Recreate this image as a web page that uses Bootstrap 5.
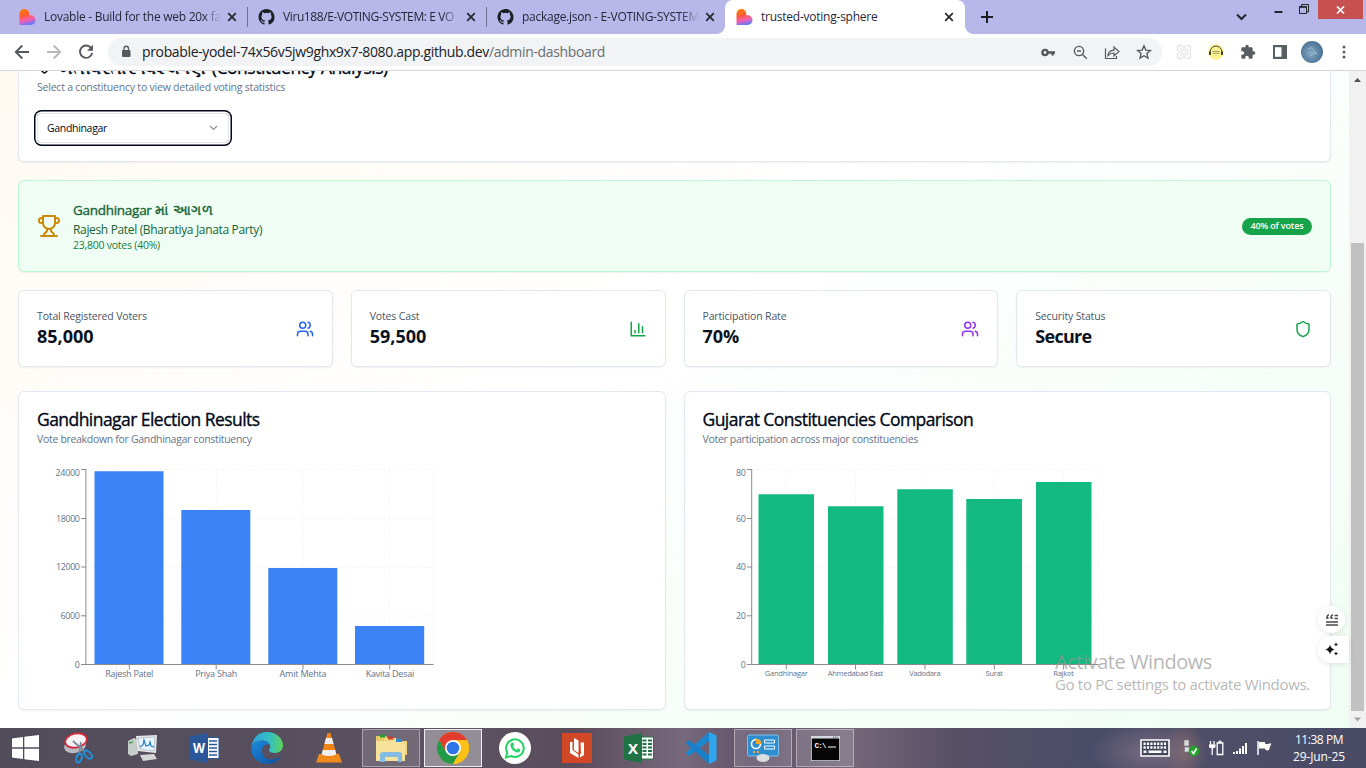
<!DOCTYPE html>
<html lang="en">
<head>
<meta charset="utf-8">
<meta name="viewport" content="width=device-width, initial-scale=1">
<title>trusted-voting-sphere</title>
<link href="https://cdn.jsdelivr.net/npm/bootstrap@5.3.0/dist/css/bootstrap.min.css" rel="stylesheet">
<style>
html,body{height:100%;overflow:hidden}
body{font-family:"Open Sans","Noto Sans",sans-serif;font-size:12px;line-height:1.2;color:#020817;background:#fff}
svg{display:block;flex:none}
.screen{width:1366px;height:768px;overflow:hidden;position:relative}
.txt{white-space:nowrap}
/* browser */
.tabstrip{height:34px;background:#b7b7e9;padding-left:8px;color:#27273a}
.btab{width:239px;height:34px;padding-left:11px;position:relative}
.btab svg.fav{margin-right:8px}
.btab .ttl{width:177px;margin-right:6px;letter-spacing:-.27px}
.btab .ttl.t2{letter-spacing:-.4px}
.btab .fade-end{-webkit-mask-image:linear-gradient(90deg,#000 90%,transparent 100%);mask-image:linear-gradient(90deg,#000 90%,transparent 100%)}
.btab .rule{position:absolute;right:-1px;top:7px;width:1px;height:20px;background:#6f6f93}
.btab.active{background:#fff;border-radius:8px 8px 0 0;width:240px}
.btab.active .ttl{letter-spacing:-.24px}
.btab.active::before,.btab.active::after{content:"";position:absolute;bottom:0;width:8px;height:8px}
.btab.active::before{left:-8px;background:radial-gradient(circle at 0 0,transparent 7.5px,#fff 8px)}
.btab.active::after{right:-8px;background:radial-gradient(circle at 100% 0,transparent 7.5px,#fff 8px)}
.winclose{width:45px;height:19px;background:#c75050}
.toolbar{height:37px;border-bottom:1px solid #d5d6d9;background:#fff;padding-left:6px}
.tool{width:32px;height:36px}
.omni{width:1054px;height:28px;border-radius:14px;background:#f1f3f4;margin-left:6px;margin-right:6px;padding-left:12px;padding-right:2px}
.url{font-size:14px;letter-spacing:-.35px;color:#202124;margin-left:10px}
.url span{color:#6a6d71}
/* page */
.page{width:1349px;height:657px;overflow:hidden;padding:0 18px;background:linear-gradient(to bottom right,#fff7ed,#fff,#f0fdf4) left bottom/1349px 875px no-repeat}
.panel{background:#fff;border:1px solid #e2e8f0;border-radius:6px;box-shadow:0 1px 2px rgba(0,0,0,.06)}
.p-select{height:121px;margin-top:-30px;padding:13px 18px 0}
.h-lg{font-size:17.5px;line-height:24px;letter-spacing:-.55px;-webkit-text-stroke:.35px #020817}
.h-guj{letter-spacing:.35px}
.h-paren{margin-left:5px;letter-spacing:-.46px}
.desc{font-size:10.5px;line-height:17px;color:#64748b;letter-spacing:-.21px}
.chart .desc{letter-spacing:-.31px}
.pick{width:192px;height:30px;border:1px solid #e2e8f0;border-radius:4.5px;font-size:10.5px;letter-spacing:-.32px;padding:0 10px 0 9px;margin-top:17px;box-shadow:0 0 0 1.5px #fff,0 0 0 3px #020817}
.leader{height:92px;margin-top:18px;background:#f0fdf4;border-color:#bbf7d0;padding:0 18px;color:#166534}
.leader .a{font-size:13.5px;line-height:20px;letter-spacing:-.28px;-webkit-text-stroke:.35px #166534}
.leader .a .h-guj{letter-spacing:.6px}
.leader .b{font-size:12px;line-height:18px;letter-spacing:-.34px;position:relative;top:1px}
.leader .c{font-size:10.5px;line-height:14px;letter-spacing:-.24px;color:#15803d}
.pill{background:#16a34a;color:#fff;font-size:9px;font-weight:600;letter-spacing:-.16px;height:17px;border-radius:9px;width:70px}
.stats{margin-top:18px;gap:18px;display:grid;grid-template-columns:repeat(4,1fr)}
.stat{height:77px;padding:0 18px}
.stat .k{font-size:10.5px;line-height:15px;color:#4b5563;letter-spacing:-.15px}
.stat .v{font-size:18px;line-height:24px;font-weight:700;color:#0b1220}
.stat .tight{letter-spacing:-.7px}
.charts{margin-top:24px;gap:18px;display:grid;grid-template-columns:1fr 1fr}
.chart{height:319px;padding:15px 18px 0}
.chart svg text{fill:#64748b;font-size:9px}
.chart svg text.sm{font-size:7.5px}
.gl{stroke:#f5f6f7;stroke-dasharray:3 2.2;fill:none}
.ax{stroke:#8b8b8b;fill:none}
/* scrollbar */
.sbar{width:17px;background:#f1f1f1}
.thumb{width:13px;height:468px;background:#c1c1c1;margin-top:155px}
/* overlays */
.watermark{position:absolute;left:1055px;top:650px;color:rgba(150,150,150,.7)}
.watermark .w1{font-size:20px;line-height:24px;letter-spacing:-.45px}
.watermark .w2{font-size:15px;line-height:21px;letter-spacing:-.32px}
.fab{position:absolute;background:#fff;box-shadow:0 1px 6px rgba(0,0,0,.1)}
.fab-a{left:1318px;top:606px;width:27px;height:27px;border-radius:50%}
.fab-b{left:1318px;top:636px;width:31px;height:27px;border-radius:14px 0 0 14px;padding-left:6px}
/* taskbar */
.taskbar{height:40px;background:radial-gradient(ellipse 60px 30px at 1150px 24px,rgba(150,130,150,.55),transparent),radial-gradient(ellipse 20px 36px at 1184px 24px,rgba(140,105,95,.6),transparent),linear-gradient(90deg,#524c5a 0,#574f5e 20%,#5c5361 34%,#5a4b5c 42%,#77697b 50%,#5f5268 55%,#756879 62%,#575067 70%,#4a4c68 80%,#4f4e68 88%,#484a66 100%);color:#fff}
.tb{width:58px;height:38px;margin:1px 4px 1px 0}
.tb.start{width:50px;margin-right:2px}
.tb.open{border:1px solid rgba(255,255,255,.4);background:rgba(255,255,255,.14)}
.tb.current{border:1px solid #eee;background:rgba(255,255,255,.34)}
.tray{gap:9px;margin-right:13px}
.clock{font-size:12px;line-height:17px;width:68px;margin-right:13px}
.clock .c1{letter-spacing:-.45px}
.clock .c2{letter-spacing:-.12px}
</style>
</head>
<body>
<svg width="0" height="0" class="position-absolute">
<defs>
<linearGradient id="lov" x1="0.3" y1="0" x2="0.55" y2="1"><stop offset="0" stop-color="#ff7a00"/><stop offset=".4" stop-color="#ff5a3c"/><stop offset=".68" stop-color="#f55fb0"/><stop offset="1" stop-color="#5b7bff"/></linearGradient>
<symbol id="heart" viewBox="0 0 16 16"><path fill="url(#lov)" d="M0 5a4.900 4.900 0 0 1 9.800 0v1.200h1.300a4.900 4.900 0 0 1 0 9.800H0z"/></symbol>
<symbol id="gh" viewBox="0 0 16 16"><path fill="#1b1f23" d="M8 0C3.58 0 0 3.58 0 8c0 3.54 2.29 6.53 5.47 7.59.4.07.55-.17.55-.38 0-.19-.01-.82-.01-1.49-2.01.37-2.53-.49-2.69-.94-.09-.23-.48-.94-.82-1.13-.28-.15-.68-.52-.01-.53.63-.01 1.08.58 1.23.82.72 1.21 1.87.87 2.33.66.07-.52.28-.87.51-1.07-1.78-.2-3.64-.89-3.64-3.95 0-.87.31-1.59.82-2.15-.08-.2-.36-1.02.08-2.12 0 0 .67-.21 2.2.82a7.6 7.6 0 0 1 4 0c1.53-1.04 2.2-.82 2.2-.82.44 1.1.16 1.92.08 2.12.51.56.82 1.27.82 2.15 0 3.07-1.87 3.75-3.65 3.95.29.25.54.73.54 1.48 0 1.07-.01 1.93-.01 2.2 0 .21.15.46.55.38A8 8 0 0 0 16 8c0-4.42-3.58-8-8-8"/></symbol>
<symbol id="x" viewBox="0 0 10 10"><path d="M1.200 1.200l7.600 7.600M8.800 1.200L1.200 8.800" stroke="#27272e" stroke-width="1.700"/></symbol>
<symbol id="users" viewBox="0 0 24 24"><g fill="none" stroke="currentColor" stroke-width="2" stroke-linecap="round" stroke-linejoin="round"><path d="M16 21v-2a4 4 0 0 0-4-4H6a4 4 0 0 0-4 4v2"/><circle cx="9" cy="7" r="4"/><path d="M22 21v-2a4 4 0 0 0-3-3.870M16 3.130a4 4 0 0 1 0 7.750"/></g></symbol>
</defs>
</svg>
<div class="screen d-flex flex-column">
  <header>
    <div class="tabstrip d-flex">
      <div class="btab d-flex align-items-center"><svg class="fav" width="17" height="16"><use href="#heart"/></svg><div class="ttl txt fade-end">Lovable - Build for the web 20x fa</div><svg width="10" height="10"><use href="#x"/></svg><i class="rule"></i></div>
      <div class="btab d-flex align-items-center"><svg class="fav" width="17" height="16"><use href="#gh"/></svg><div class="ttl t2 txt fade-end">Viru188/E-VOTING-SYSTEM: E VO</div><svg width="10" height="10"><use href="#x"/></svg><i class="rule"></i></div>
      <div class="btab d-flex align-items-center"><svg class="fav" width="17" height="16"><use href="#gh"/></svg><div class="ttl txt fade-end">package.json - E-VOTING-SYSTEM</div><svg width="10" height="10"><use href="#x"/></svg></div>
      <div class="btab active d-flex align-items-center"><svg class="fav" width="17" height="16"><use href="#heart"/></svg><div class="ttl txt">trusted-voting-sphere</div><svg width="10" height="10"><use href="#x"/></svg></div>
      <svg class="align-self-center ms-3" width="12" height="12" viewBox="0 0 12 12"><path d="M6 0v12M0 6h12" stroke="#1c1c24" stroke-width="2"/></svg>
      <div class="d-flex ms-auto align-items-start">
        <svg width="84" height="24" viewBox="1235 0 84 24" fill="none" stroke="#23232b"><path d="M1238 14.500l4.500 4.500 4.500-4.500" stroke-width="2"/><path d="M1275.500 12h8" stroke-width="2"/><path d="M1300.500 6.500h7v7h-7zM1302.500 6v-1.500h7v7.500h-2"/><path d="M1300 7.300h8"/></svg>
        <div class="winclose d-flex align-items-center justify-content-center" style="margin-right:3px"><svg width="9" height="8" viewBox="0 0 9 8"><path d="M1 .5l7 7M8 .5l-7 7" stroke="#fff" stroke-width="1.700"/></svg></div>
      </div>
    </div>
    <div class="toolbar d-flex align-items-center">
      <div class="tool d-flex align-items-center justify-content-center"><svg width="16" height="16" viewBox="0 0 16 16" fill="none" stroke="#55585d" stroke-width="1.900"><path d="M15 8H2M8.300 1.500L1.800 8l6.500 6.500"/></svg></div>
      <div class="tool d-flex align-items-center justify-content-center"><svg width="16" height="16" viewBox="0 0 16 16" fill="none" stroke="#b7b9bc" stroke-width="1.900"><path d="M1 8h13M7.700 1.500L14.200 8l-6.500 6.500"/></svg></div>
      <div class="tool d-flex align-items-center justify-content-center"><svg width="16" height="16" viewBox="0 0 16 16"><path d="M13.300 4.200A6.200 6.200 0 1 0 14.200 9" fill="none" stroke="#55585d" stroke-width="1.900"/><path d="M15 .8v6H9z" fill="#55585d"/></svg></div>
      <div class="omni d-flex align-items-center">
        <svg width="12" height="14" viewBox="0 0 12 14"><rect x="2" y="5" width="8.500" height="7" rx="1" fill="#55585d"/><path d="M4 5.500V3.500a2.250 2.250 0 0 1 4.500 0v2" fill="none" stroke="#55585d" stroke-width="1.300"/></svg>
        <div class="url txt">probable-yodel-74x56v5jw9ghx9x7-8080.app.github.dev<span>/admin-dashboard</span></div>
        <div class="d-flex ms-auto">
          <div class="tool d-flex align-items-center justify-content-center"><svg width="14" height="9" viewBox="0 0 14 9" fill="none" stroke="#55585d"><circle cx="4" cy="4.500" r="2.600" stroke-width="2.400"/><path d="M6.500 4.500H14M11.700 4.500v3" stroke-width="2.400"/></svg></div>
          <div class="tool d-flex align-items-center justify-content-center"><svg width="15" height="15" viewBox="0 0 15 15" fill="none" stroke="#55585d" stroke-width="1.400"><circle cx="6" cy="6" r="4.600"/><path d="M9.500 9.500l4.300 4.300M4 6h4"/></svg></div>
          <div class="tool d-flex align-items-center justify-content-center"><svg width="16" height="15" viewBox="0 0 16 15" fill="none" stroke="#55585d" stroke-width="1.200"><path d="M1.500 3.500v10h11V11M4 10.500c.3-3 2-5 6-5.300V2l5 4.500-5 4.500V8c-2.800 0-4.600.8-6 2.500z"/></svg></div>
          <div class="tool d-flex align-items-center justify-content-center"><svg width="16" height="16" viewBox="0 0 16 16"><path d="M8 1.800l1.800 4.300 4.700.4-3.600 3 1.100 4.600L8 11.700l-4 2.400 1.100-4.600-3.600-3 4.700-.4z" fill="none" stroke="#55585d" stroke-width="1.300"/></svg></div>
        </div>
      </div>
      <div class="d-flex">
        <div class="tool d-flex align-items-center justify-content-center"><svg width="14" height="14" viewBox="0 0 14 14" fill="none" stroke="#e2e2e2"><path d="M.5.500h5.500v5.500H.5zM8 .5h5.500V6H8zM.5 8H6v5.500H.5zM8 8h5.500v5.500H8zM2 2l3 3M12 2L9 5M2 12l3-3M12 12L9 9"/></svg></div>
        <div class="tool d-flex align-items-center justify-content-center"><svg width="16" height="16" viewBox="0 0 16 16"><circle cx="8" cy="8" r="7.800" fill="#fbf391"/><path d="M2.200 9V7.800a5.800 5.800 0 0 1 11.600 0V9" fill="none" stroke="#333" stroke-width=".9"/><path d="M1.200 7.500h1.600v3.500H1.200zM13.200 7.500h1.600v3.500h-1.600z" fill="#222"/><path d="M4.500 7.500h7M4.500 9.300h7" stroke="#a8a268"/></svg></div>
        <div class="tool d-flex align-items-center justify-content-center"><svg width="16" height="16" viewBox="0 0 24 24" fill="#5a5d62"><path d="M20.500 11H19V7c0-1.100-.9-2-2-2h-4V3.500a2.500 2.500 0 0 0-5 0V5H4c-1.100 0-2 .9-2 2v3.800h1.500a2.700 2.700 0 0 1 0 5.400H2V20c0 1.100.9 2 2 2h3.800v-1.500a2.700 2.700 0 0 1 5.400 0V22H17c1.100 0 2-.9 2-2v-4h1.500a2.500 2.500 0 0 0 0-5z"/></svg></div>
        <div class="tool d-flex align-items-center justify-content-center"><svg width="14" height="14" viewBox="0 0 14 14"><path d="M0 0h14v14H0z" fill="#5a5d62"/><path d="M2 2.200h6.500v9.600H2z" fill="#fff"/></svg></div>
        <div class="tool d-flex align-items-center justify-content-center"><svg width="22" height="22" viewBox="0 0 22 22"><defs><radialGradient id="av" cx=".45" cy=".55"><stop offset="0" stop-color="#86a9c4"/><stop offset="1" stop-color="#4f7699"/></radialGradient></defs><circle cx="11" cy="11" r="11" fill="url(#av)"/><path d="M7 8l4-1.500 2 4 3 2-4-.5-2 3" fill="none" stroke="#b4cad9" stroke-width=".8" opacity=".8"/></svg></div>
        <div class="tool d-flex align-items-center justify-content-center"><svg width="4" height="14" viewBox="0 0 4 14" fill="#5a5d62"><circle cx="2" cy="2" r="1.500"/><circle cx="2" cy="7" r="1.500"/><circle cx="2" cy="12" r="1.500"/></svg></div>
      </div>
    </div>
  </header>

  <div class="d-flex">
    <main class="page">
      <section class="panel p-select">
        <div class="h-lg txt d-flex align-items-center"><svg width="15" height="18" viewBox="0 0 24 24" fill="none" stroke="#020817" stroke-width="2.200"><path d="M20 10c0 6-8 12-8 12s-8-6-8-12a8 8 0 0 1 16 0z"/><circle cx="12" cy="10" r="3"/></svg><span class="h-guj ms-2">મતવિસ્તાર વિશ્લેષણ</span><span class="h-paren">(Constituency Analysis)</span></div>
        <div class="desc txt">Select a constituency to view detailed voting statistics</div>
        <div class="pick d-flex align-items-center justify-content-between"><span>Gandhinagar</span><svg width="9" height="6" viewBox="0 0 9 6"><path d="M1 1l3.500 3.500L8 1" fill="none" stroke="#8c9098" stroke-width="1.200"/></svg></div>
      </section>

      <section class="panel leader d-flex align-items-center">
        <svg width="24" height="24" viewBox="0 0 24 24" fill="none" stroke="#ca8a04" stroke-width="2" stroke-linecap="round" stroke-linejoin="round"><path d="M6 9H4.500a2.500 2.500 0 0 1 0-5H6M18 9h1.500a2.500 2.500 0 0 0 0-5H18M4 22h16M10 14.660V17c0 .55-.47.98-.97 1.210C7.850 18.750 7 20.240 7 22M14 14.660V17c0 .55.47.98.97 1.210C16.150 18.750 17 20.240 17 22M18 2H6v7a6 6 0 0 0 12 0z"/></svg>
        <div class="ms-2 ps-1 txt">
          <div class="a">Gandhinagar <span class="h-guj">માં આગળ</span></div>
          <div class="b">Rajesh Patel (Bharatiya Janata Party)</div>
          <div class="c">23,800 votes (40%)</div>
        </div>
        <div class="pill ms-auto d-flex align-items-center justify-content-center txt">40% of votes</div>
      </section>

      <section class="stats">
        <div class="panel stat d-flex align-items-center justify-content-between"><div><div class="k">Total Registered Voters</div><div class="v">85,000</div></div><svg width="18" height="18" style="color:#2563eb"><use href="#users"/></svg></div>
        <div class="panel stat d-flex align-items-center justify-content-between"><div><div class="k">Votes Cast</div><div class="v">59,500</div></div><svg width="18" height="18" viewBox="0 0 24 24" fill="none" stroke="#16a34a" stroke-width="2" stroke-linecap="round"><path d="M3 3v18h18M8 17v-3M13 17V5M18 17V9"/></svg></div>
        <div class="panel stat d-flex align-items-center justify-content-between"><div><div class="k">Participation Rate</div><div class="v">70%</div></div><svg width="18" height="18" style="color:#9333ea"><use href="#users"/></svg></div>
        <div class="panel stat d-flex align-items-center justify-content-between"><div><div class="k">Security Status</div><div class="v tight">Secure</div></div><svg width="18" height="18" viewBox="0 0 24 24" fill="none" stroke="#16a34a" stroke-width="2" stroke-linejoin="round"><path d="M20 13c0 5-3.500 7.500-7.660 8.950a1 1 0 0 1-.67-.01C7.500 20.500 4 18 4 13V6a1 1 0 0 1 1-1c2 0 4.500-1.200 6.240-2.720a1.170 1.170 0 0 1 1.520 0C14.510 3.810 17 5 19 5a1 1 0 0 1 1 1z"/></svg></div>
      </section>

      <section class="charts">
        <div class="panel chart">
          <div class="h-lg txt">Gandhinagar Election Results</div>
          <div class="desc txt">Vote breakdown for Gandhinagar constituency</div>
          <svg width="410" height="240" viewBox="37 448 410 240">
            <path class="gl" d="M86 469.500h347.500v195M86 518.500h347M86 567.500h347M86 616h347M129.500 470v194M216.500 470v194M303 470v194M389.500 470v194"/>
            <g fill="#3b82f6"><path d="M94.500 471.300h69v193.200h-69zM181.300 510h69v154.500h-69zM268.300 568h69v96.500h-69zM355 626.100h69.200v38.400H355z"/></g>
            <path class="ax" d="M81 469.500h5M81 518.500h5M81 567h5M81 615.800h5M81 664.500h352.500M85.900 469v196M129.300 665v4.500M216.200 665v4.500M303 665v4.500M389.800 665v4.500"/>
            <g text-anchor="end"><text x="80" y="476" textLength="24.500">24000</text><text x="80" y="521.500" textLength="24">18000</text><text x="80" y="570" textLength="24">12000</text><text x="80" y="619" textLength="19.500">6000</text><text x="80" y="668">0</text></g>
            <g text-anchor="middle"><text x="129.300" y="677" textLength="48">Rajesh Patel</text><text x="216.200" y="677" textLength="42">Priya Shah</text><text x="303" y="677" textLength="47">Amit Mehta</text><text x="390" y="677" textLength="48.500">Kavita Desai</text></g>
          </svg>
        </div>
        <div class="panel chart">
          <div class="h-lg txt">Gujarat Constituencies Comparison</div>
          <div class="desc txt">Voter participation across major constituencies</div>
          <svg width="410" height="240" viewBox="703 448 410 240">
            <path class="gl" d="M752 469.500h346.500v195M752 518.500h346M752 567.500h346M752 616h346M786.300 470v194M855.500 470v194M925 470v194M994.300 470v194M1063.600 470v194"/>
            <g fill="#12b981"><path d="M758.500 494.200H814v170.300h-55.500zM828 506.300h55.500v158.200H828zM897.300 489.200h55.500v175.300h-55.500zM966.300 499H1022v165.500h-55.700zM1036 482h55.500v182.500H1036z"/></g>
            <path class="ax" d="M747 469.500h5M747 518.500h5M747 567h5M747 615.800h5M747 664.500h351.500M751.700 469v196M786.300 665v4.500M855.500 665v4.500M925 665v4.500M994.300 665v4.500M1063.600 665v4.500"/>
            <g text-anchor="end"><text x="746" y="476" textLength="10">80</text><text x="746" y="521.500" textLength="10">60</text><text x="746" y="570" textLength="10">40</text><text x="746" y="619" textLength="10">20</text><text x="746" y="668">0</text></g>
            <g text-anchor="middle"><text class="sm" x="786.300" y="676" textLength="43">Gandhinagar</text><text class="sm" x="855.500" y="676" textLength="55.500">Ahmedabad East</text><text class="sm" x="925" y="676" textLength="31.500">Vadodara</text><text class="sm" x="994.300" y="676" textLength="17.500">Surat</text><text class="sm" x="1063.600" y="676" textLength="20.500">Rajkot</text></g>
          </svg>
        </div>
      </section>
    </main>
    <aside class="sbar d-flex flex-column align-items-center">
      <svg width="17" height="17" viewBox="0 0 17 17"><path d="M5 11h7L8.500 7z" fill="#505050"/></svg>
      <div class="thumb"></div>
      <svg class="mt-auto" width="17" height="17" viewBox="0 0 17 17"><path d="M5 6.500h7l-3.500 4z" fill="#a3a3a3"/></svg>
    </aside>
  </div>

  <footer class="taskbar d-flex align-items-center">
    <div class="tb start d-flex align-items-center justify-content-center"><svg width="27" height="26" viewBox="0 0 27 26" fill="#fff"><path d="M0 3.500L11 2v10.300H0zM12.300 1.800L27 0v12.300H12.300zM0 13.700h11V24L0 22.500zM12.300 13.700H27V26l-14.700-1.800z"/></svg></div>
    <div class="tb d-flex align-items-center justify-content-center"><svg width="34" height="32" viewBox="2 0 34 32"><ellipse cx="13" cy="14" rx="11" ry="7" fill="#b9b9c4" transform="rotate(-12 13 14)"/><ellipse cx="14" cy="8.500" rx="11" ry="7" fill="#f3f3f5" stroke="#d3283b" stroke-width="1.800" transform="rotate(-12 14 8.500)"/><path d="M11 9l12 11M19 10l-2 12" stroke="#7d8796" stroke-width="1.800"/><g fill="none" stroke="#1f8fd6" stroke-width="2"><ellipse cx="17" cy="26" rx="2.600" ry="4.500" transform="rotate(20 17 26)"/><ellipse cx="26" cy="22.500" rx="2.600" ry="5" transform="rotate(-45 26 22.500)"/></g></svg></div>
    <div class="tb d-flex align-items-center justify-content-center"><svg width="32" height="30" viewBox="0 0 32 30"><path d="M1 8l6-3 4 2v14l-7 2-3-2z" fill="#c6ccc9"/><path d="M2 10l4-1" stroke="#44a04a" stroke-width="1.500"/><path d="M9 3l21-1-1 18-18-2z" fill="#e8eaea"/><path d="M11 5l17-1-1 14-14-2z" fill="#e9f5ff" stroke="#9fb0bb" stroke-width=".7"/><path d="M13 14l3-2 1-5 2 6 3-1 1-3 1 4 3 1" fill="none" stroke="#207fc4" stroke-width="1.200"/><path d="M13 22l14-1 3 5-14 2z" fill="#d4d7d7"/></svg></div>
    <div class="tb d-flex align-items-center justify-content-center"><svg width="30" height="30" viewBox="0 0 30 30"><path d="M16 4.500h13v21H16z" fill="#fff" stroke="#2b579a"/><path d="M19 8h8M19 11.500h8M19 15h8M19 18.500h8M19 22h8" stroke="#2b579a" stroke-width="1.500"/><path d="M0 3.500L18 0v30L0 26.500z" fill="#2b579a"/><text x="3" y="20" font-size="14" font-weight="700" fill="#fff" textLength="12" lengthAdjust="spacingAndGlyphs">W</text></svg></div>
    <div class="tb d-flex align-items-center justify-content-center"><svg width="32" height="32" viewBox="0 0 32 32"><defs><linearGradient id="ed" x2="1"><stop offset="0" stop-color="#2e9fe0"/><stop offset=".6" stop-color="#35c1c0"/><stop offset="1" stop-color="#62d35a"/></linearGradient><linearGradient id="ed2" x1="0" y1="0" x2="1" y2="1"><stop offset="0" stop-color="#1d8bdc"/><stop offset="1" stop-color="#0f4f9e"/></linearGradient></defs><path d="M.5 14C2 5 8 0 16 0c9 0 16 6 16 13.500 0 4.500-3.500 7.500-8 7.500-3.500 0-6-1-6-2.500 0-1 1.200-1.700 1.200-3.800C19.200 11 15 8.500 10.500 8.500 6 8.500 2 11 .5 14z" fill="url(#ed)"/><path d="M.3 15.500C1 11.500 5.500 8.500 10.500 8.500c4 0 7 1.500 8.200 4-4-1.500-7.700 2-7.700 6.500 0 6 6 10.500 14.500 7.500 2-.7 3.500-2 4-1.500C27 29.500 22 32 16 32 7 32-.5 24.500.3 15.500z" fill="url(#ed2)"/></svg></div>
    <div class="tb d-flex align-items-center justify-content-center"><svg width="28" height="30" viewBox="0 0 28 30"><path d="M4 21h20l3 8.500H1z" fill="#f08a1c"/><path d="M12.500 0h3L22 23q-8 4-16 0z" fill="#f18318"/><path d="M11 5h6l1.600 6h-9.200zM7.800 17h12.400l1.200 4.500q-7.400 3-14.800 0z" fill="#eee"/></svg></div>
    <div class="tb open d-flex align-items-center justify-content-center"><svg width="32" height="31" viewBox="0 0 32 31"><path d="M1 3h10l2 2h6v5H1z" fill="#e9c967"/><path d="M9 5h12l2 3h9v14H9z" fill="#f1d67c"/><path d="M1 8h24l5 3v17H1z" fill="#f6e29a"/><path d="M5 1.500h5v3H5z" fill="#25a031"/><path d="M13 3.500h5v3h-5z" fill="#cf3f2b"/><path d="M21 6h6v3h-6z" fill="#2a8fdb"/><path d="M5 29v-7q0-3 3-3h16q3 0 3 3v7h-4v-5H10v5z" fill="#83bce0"/></svg></div>
    <div class="tb current d-flex align-items-center justify-content-center"><svg width="32" height="32" viewBox="0 0 32 32"><circle cx="16" cy="16" r="16" fill="#fbc116"/><path d="M2.140 8A16 16 0 0 1 29.860 8H16l-7 12z" fill="#e33b2e"/><path d="M2.140 8A16 16 0 0 0 16 32l7-12-7 4-7-4z" fill="#229a48"/><path d="M16 8h13.860A16 16 0 0 1 16 32l7-12z" fill="#fbc116"/><circle cx="16" cy="16" r="8" fill="#fff"/><circle cx="16" cy="16" r="6.300" fill="#2f73e8"/></svg></div>
    <div class="tb d-flex align-items-center justify-content-center"><svg width="32" height="32" viewBox="0 0 32 32"><circle cx="16" cy="16" r="16" fill="#fff"/><path d="M7 25.500l1.300-5A8.800 8.800 0 1 1 12 24z" fill="none" stroke="#25d366" stroke-width="2"/><path d="M12.500 11c.8-.8 1.600-.6 2 .5l.6 1.500-1 1.500c.8 1.500 2 2.600 3.600 3.200l1.300-1.400 2.200 1.100c.4 1.800-1 3-2.500 3-4-.5-7.500-4.500-7.300-7.500.1-.8.500-1.300 1.100-1.900z" fill="#25d366"/></svg></div>
    <div class="tb d-flex align-items-center justify-content-center"><svg width="30" height="30" viewBox="0 0 30 30"><path d="M0 0h30v30H0z" fill="#d24726"/><path d="M8 9h2.500v8l6 4.500V25L8 20zM12 5l4.500 2.500V20L12 17zM18.500 9.500H22V22l-4 2.500v-3l1-1z" fill="#fff"/></svg></div>
    <div class="tb d-flex align-items-center justify-content-center"><svg width="30" height="30" viewBox="0 0 30 30"><path d="M16 4h13.500v22H16z" fill="#fff" stroke="#217346"/><path d="M18.500 7.500h4M24 7.500h4M18.500 11h4M24 11h4M18.500 14.500h4M24 14.500h4M18.500 18h4M24 18h4M18.500 21.500h4M24 21.500h4" stroke="#217346" stroke-width="2"/><path d="M0 3.500L18 0v30L0 26.500z" fill="#217346"/><text x="4" y="20.500" font-size="15" font-weight="700" fill="#fff">X</text></svg></div>
    <div class="tb d-flex align-items-center justify-content-center"><svg width="32" height="32" viewBox="0 0 32 32"><path d="M24 0v9L4 24l-3.500-3z" fill="#1b86d1"/><path d="M24 32v-9L4 8 .5 11z" fill="#1a7fc6"/><path d="M24 0l7.500 3.500v25L24 32z" fill="#2ea6ee"/></svg></div>
    <div class="tb open d-flex align-items-center justify-content-center"><svg width="32" height="28" viewBox="0 0 32 28"><rect x=".5" y="1" width="31" height="21" rx="1.500" fill="#2e8ed0" stroke="#7cc0ea"/><circle cx="9" cy="10" r="4.500" fill="none" stroke="#fff" stroke-width="1.600"/><path d="M9 10V4.500A5.500 5.500 0 0 1 14.500 10z" fill="#f5a62a"/><path d="M17.500 6h10v3h-10zM17.500 12h10v3h-10z" fill="#2e8ed0" stroke="#fff"/><path d="M6 18h2M10 18h2" stroke="#f5a62a" stroke-width="2"/><ellipse cx="16" cy="24" rx="6.500" ry="4" fill="#dcdde0"/></svg></div>
    <div class="tb open d-flex align-items-center justify-content-center"><svg width="29" height="25" viewBox="0 0 29 25"><path d="M0 0h29v25H0z" fill="#d5d9e0"/><path d="M.8 2.500h27.400v21.700H.8z" fill="#050505"/><path d="M22 1.200h5" stroke="#4f68a0" stroke-dasharray="1.200 .6"/><text x="3.500" y="11.500" font-size="7.500" fill="#fff" font-family="Liberation Mono,monospace" font-weight="700" textLength="12">C:\</text><path d="M17 11h8" stroke="#fff"/></svg></div>
    <div class="tray d-flex align-items-center ms-auto">
      <svg width="30" height="18" viewBox="0 0 30 18"><path d="M1 1h28v16H1z" fill="#44455c" stroke="#fff" stroke-width="1.600"/><path d="M3.500 4.800h23M3.500 8.500h23" stroke="#fff" stroke-width="2.600" stroke-dasharray="2.200 1.200"/><path d="M3.500 12.800h3M8.500 12.800h13M23.500 12.800h3" stroke="#fff" stroke-width="2.400"/></svg>
      <svg class="ms-1" width="17" height="18" viewBox="0 0 17 18"><path d="M1 1h5v6H1zM1.500 8h5v5h-5z" fill="#d9dadd" stroke="#777" stroke-width=".6"/><circle cx="11" cy="12" r="5.300" fill="#23a32a"/><path d="M8.500 12l2 2.500 3-5" stroke="#fff" stroke-width="1.600" fill="none"/></svg>
      <svg width="15" height="16" viewBox="0 0 15 16" fill="none" stroke="#fff"><path d="M1.500 1v3M5 1v3" stroke-width="1.300"/><path d="M0 4.200h6.500v2q0 2-2 2H2Q0 8.200 0 6.200z" fill="#fff" stroke="none"/><path d="M3.200 8v7" stroke-width="1.300"/><path d="M8.200 3h5.600v11.500H8.200zM9.500 1.500h3" stroke-width="1.300"/></svg>
      <svg width="15" height="12" viewBox="0 0 15 12" stroke="#fff" stroke-width="2"><path d="M1 10v2M4 9v3M7 6.500V12M10 4v8M13 1v11"/></svg>
      <svg width="15" height="14" viewBox="0 0 15 14"><path d="M1 0v14" stroke="#fff" stroke-width="1.500"/><path d="M2 1h6v1.500c2 1.500 4-.5 6.500 0L13 5.500l-1 3.500c-2 1-4 0-4-1.500H2z" fill="#fff"/></svg>
    </div>
    <div class="clock text-center txt"><div class="c1">11:38 PM</div><div class="c2">29-Jun-25</div></div>
  </footer>

  <div class="fab fab-a d-flex align-items-center justify-content-center"><svg width="12" height="12" viewBox="0 0 12 12" stroke="#4a4a4a" stroke-width="1.300"><path d="M0 8h12M0 11h12M8.500 1.500H12M8.500 4.500H12"/><path d="M3 .8Q.5 1.200 1 4.500M7 .8Q4.500 1.200 5 4.500" fill="none"/><path d="M.8 4h1.700M4.800 4h1.700" stroke-width="2"/></svg></div>
  <div class="fab fab-b d-flex align-items-center"><svg width="15" height="15" viewBox="0 0 15 15" fill="#161616"><path d="M6 2.500q.8 4.200 5 5-4.200.8-5 5-.8-4.200-5-5 4.200-.8 5-5zM12 .5q.3 1.700 2 2-1.700.3-2 2-.3-1.700-2-2 1.700-.3 2-2zM12 9.500q.3 1.700 2 2-1.700.3-2 2-.3-1.700-2-2 1.700-.3 2-2z"/></svg></div>
  <div class="watermark txt"><div class="w1">Activate Windows</div><div class="w2">Go to PC settings to activate Windows.</div></div>
</div>
<script src="https://cdn.jsdelivr.net/npm/bootstrap@5.3.0/dist/js/bootstrap.bundle.min.js"></script>
</body>
</html>
